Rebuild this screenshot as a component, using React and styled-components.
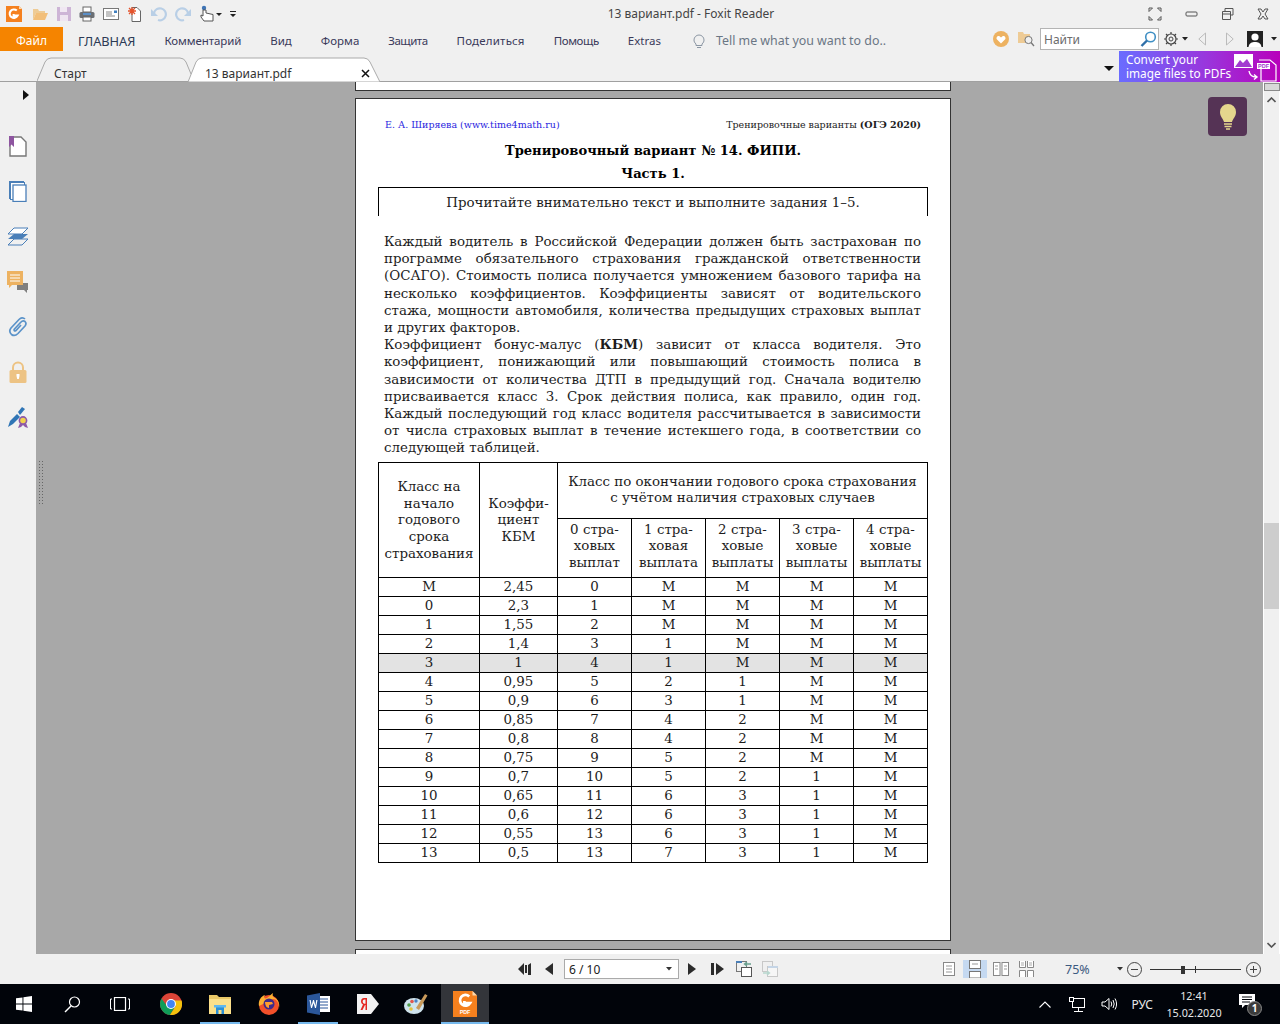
import React from "react";
import styled, { createGlobalStyle } from "styled-components";

const Global = createGlobalStyle`
  html, body { margin: 0; padding: 0; background: #f0f0f0; }
  body { width: 1280px; height: 1024px; overflow: hidden; font-family: "Noto Sans", sans-serif; }
`;

const Win = styled.div`
  width: 1280px;
  height: 1024px;
  display: flex;
  flex-direction: column;
  overflow: hidden;
`;

/* title bar */
const TitleBar = styled.div`
  height: 27px;
  flex: none;
  display: grid;
  grid-template-columns: 1fr auto 1fr;
  align-items: center;
  background: #f0f0f0;
`;
const QuickBar = styled.div`
  display: flex;
  align-items: center;
  gap: 8px;
  padding-left: 6px;
  height: 27px;
`;
const Title = styled.div`
  font-size: 12px;
  color: #444;
  padding-left: 102px;
`;
const WinControls = styled.div`
  display: flex;
  justify-content: flex-end;
  align-items: center;
  gap: 23px;
  padding-right: 11px;
`;

/* ribbon */
const Ribbon = styled.div`
  height: 24px;
  flex: none;
  display: flex;
  align-items: center;
  background: #f0f0f0;
`;
const FileBtn = styled.div`
  width: 63px;
  height: 24px;
  background: #f58400;
  color: #fff;
  font-size: 12px;
  padding-top: 2px;
  box-sizing: border-box;
  display: flex;
  align-items: center;
  justify-content: center;
  margin-right: 15px;
`;
const RibbonTabs = styled.div`
  display: flex;
  align-items: center;
  gap: 29px;
  padding-top: 3px;
`;
const RibbonTab = styled.span`
  font-size: ${(p) => (p.$big ? "12.8px" : "11.5px")};
  letter-spacing: ${(p) => p.$ls || 0}px;
  color: ${(p) => (p.$big ? "#2c3a55" : "#3a3a5a")};
`;
const Tell = styled.div`
  display: flex;
  align-items: center;
  gap: 10px;
  margin-left: 31px;
  padding-top: 3px;
  font-size: 12.4px;
  color: #6b7684;
`;
const RibbonRight = styled.div`
  margin-left: auto;
  display: flex;
  align-items: center;
`;
const SearchBox = styled.div`
  width: 113px;
  height: 20px;
  margin: 0 5px;
  background: #fff;
  border: 1px solid #b4b4b4;
  display: flex;
  align-items: center;
  justify-content: space-between;
  padding: 0 1px 0 3px;
  font-size: 12px;
  color: #6d6d6d;
`;

/* tab strip */
const TabStrip = styled.div`
  height: 31px;
  flex: none;
  display: flex;
  background: #f0f0f0;
  border-bottom: 1px solid #a0a0a0;
  box-sizing: border-box;
  padding-left: 37px;
`;
const DocTab = styled.div`
  position: relative;
  width: ${(p) => p.$w}px;
  margin-left: ${(p) => p.$ml || 0}px;
  height: 31px;
  font-size: 12px;
  color: #333;
  display: flex;
  align-items: center;
  padding: 14px 0 0 ${(p) => p.$pl}px;
  box-sizing: border-box;
  z-index: ${(p) => (p.$active ? 1 : 0)};
  span { position: relative; }
  svg.shape { position: absolute; left: 0; top: 0; }
  svg.x { position: absolute; right: 11px; top: 18px; }
`;
const StripRight = styled.div`
  margin-left: auto;
  display: flex;
  align-items: flex-start;
`;
const Promo = styled.div`
  width: 161px;
  height: 31px;
  background: linear-gradient(90deg, #6a6cff 0%, #9a35dc 55%, #b800bb 100%);
  color: #fff;
  font-size: 11.8px;
  line-height: 13.5px;
  padding: 2px 0 0 7px;
  box-sizing: border-box;
  position: relative;
  svg { position: absolute; right: 0; top: 0; }
`;

/* main */
const Main = styled.div`
  flex: 1;
  display: flex;
  min-height: 0;
`;
const SideBar = styled.div`
  width: 36px;
  flex: none;
  background: #f0f0f0;
  display: flex;
  flex-direction: column;
  align-items: center;
  padding-top: 42px;
  box-sizing: border-box;
  position: relative;
  svg.toggle { position: absolute; left: 23px; top: 7px; }
`;
const SideSlot = styled.div`
  height: 45px;
  flex: none;
  display: flex;
  align-items: center;
`;
const Viewer = styled.div`
  flex: 1;
  background: #a8a8a8;
  position: relative;
  display: flex;
  flex-direction: column;
  align-items: center;
  overflow: hidden;
`;
const Grip = styled.div`
  position: absolute;
  left: 2px;
  top: 378px;
  width: 6px;
  height: 44px;
  background-image: radial-gradient(#666 0.8px, transparent 1px);
  background-size: 3px 3px;
`;
const Sliver = styled.div`
  width: 596px;
  height: ${(p) => p.$h}px;
  flex: none;
  background: #fff;
  border: 1px solid #333;
  box-sizing: border-box;
  ${(p) => (p.$top ? "border-top: 0;" : "border-bottom: 0;")}
  margin-left: 7px;
`;
const Page = styled.div`
  width: 596px;
  height: 843px;
  flex: none;
  margin: 7px 0 8px 7px;
  background: #fff;
  border: 1px solid #333;
  box-sizing: border-box;
  padding: 20px 22px 0 22px;
  font-family: "DejaVu Serif", serif;
  color: #1c1c1c;
`;
const PageHead = styled.div`
  display: flex;
  justify-content: space-between;
  font-size: 9.5px;
  line-height: 12px;
  margin: 0 0 0 7px;
  width: 536px;
`;
const Author = styled.span`
  color: #2a1fe0;
`;
const Heading = styled.div`
  text-align: center;
  font-weight: bold;
  font-size: 13.1px;
  line-height: 23px;
  color: #000;
  width: 550px;
  margin-top: ${(p) => p.$mt || 0}px;
`;
const NoteBox = styled.div`
  width: 550px;
  height: 29px;
  box-sizing: border-box;
  margin-top: 2px;
  border: 1px solid #000;
  border-bottom: 0;
  text-align: center;
  font-size: 13.4px;
  line-height: 30px;
`;
const Body = styled.div`
  margin: 17px 0 0 6px;
  width: 537px;
  font-size: 13.4px;
  line-height: 17.2px;
`;
const Line = styled.div`
  white-space: nowrap;
  text-align: ${(p) => (p.$last ? "left" : "justify")};
  text-align-last: ${(p) => (p.$last ? "left" : "justify")};
`;
const KbmTable = styled.table`
  border-collapse: collapse;
  table-layout: fixed;
  width: 550px;
  margin-top: 5px;
  font-size: 13.4px;
  line-height: 16.4px;
  color: #1c1c1c;
  th, td {
    border: 1px solid #000;
    padding: 0;
    text-align: center;
    font-weight: normal;
    white-space: nowrap;
  }
  th[rowspan] { padding-top: 2px; line-height: 16.6px; }
  thead tr + tr th { padding-bottom: 2px; }
  tbody tr { height: 19px; }
  tbody td { line-height: 18px; }
`;
const Col = styled.col`
  width: ${(p) => p.$w}px;
`;
const HeadRow = styled.tr`
  height: ${(p) => p.$h}px;
`;
const Row = styled.tr`
  background: ${(p) => (p.$hi ? "#e3e3e3" : "transparent")};
`;
const Bulb = styled.div`
  position: absolute;
  left: 1172px;
  top: 15px;
  width: 39px;
  height: 39px;
  border-radius: 4px;
  background: #553355;
  display: flex;
  align-items: center;
  justify-content: center;
`;
const ScrollBar = styled.div`
  width: 17px;
  flex: none;
  background: #f0f0f0;
  border-left: 1px solid #fff;
  border-right: 1px solid #fff;
  box-sizing: border-box;
  display: flex;
  flex-direction: column;
  align-items: center;
  position: relative;
`;
const SplitBox = styled.div`
  width: 16px;
  height: 8px;
  margin: 1px -1px 0 0;
  background: #d8d8d8;
  border: 1px solid #8a8a8a;
  box-sizing: border-box;
  flex: none;
`;
const Thumb = styled.div`
  position: absolute;
  top: 441px;
  left: 0;
  width: 15px;
  height: 86px;
  background: #cdcdcd;
`;
const ArrowSlot = styled.div`
  margin-top: ${(p) => (p.$end ? "auto" : "6px")};
  margin-bottom: ${(p) => (p.$end ? "2px" : "0")};
  height: 10px;
  display: flex;
`;

/* status bar */
const StatusBar = styled.div`
  height: 30px;
  flex: none;
  background: #f0f0f0;
  display: flex;
  align-items: center;
  padding-left: 518px;
  box-sizing: border-box;
`;
const PageInput = styled.div`
  width: 115px;
  height: 20px;
  box-sizing: border-box;
  border: 1px solid #aaa;
  background: #fff;
  margin: 0 9px 0 11px;
  display: flex;
  align-items: center;
  justify-content: space-between;
  padding: 0 6px 0 4px;
  font-size: 12px;
  color: #222;
`;
const Zoomed = styled.span`
  font-size: 12.5px;
  color: #3d5a80;
  width: 26px;
  margin-left: 26.5px;
`;
const LayoutBtn = styled.div`
  width: 24px;
  height: 18px;
  display: flex;
  align-items: center;
  justify-content: center;
  background: ${(p) => (p.$on ? "#c5d9f1" : "transparent")};
  margin-left: ${(p) => p.$ml || 0}px;
`;
const Slider = styled.div`
  width: 91px;
  height: 1px;
  background: #333;
  margin: 0 5px 0 7px;
  position: relative;
  &::before { content: ""; position: absolute; left: 31px; top: -3px; width: 4px; height: 8px; background: #333; }
  &::after { content: ""; position: absolute; left: 45px; top: -3px; width: 1px; height: 7px; background: #333; }
`;

/* task bar */
const TaskBar = styled.div`
  height: 40px;
  flex: none;
  background: #01040a;
  display: flex;
  align-items: stretch;
`;
const TaskSlot = styled.div`
  width: ${(p) => p.$w || 48}px;
  margin-left: ${(p) => p.$ml || 0}px;
  display: flex;
  align-items: center;
  justify-content: center;
  box-sizing: border-box;
  background: ${(p) => (p.$active ? "#33353a" : "transparent")};
  position: relative;
  ${(p) => p.$open && `&::after { content: ""; position: absolute; left: ${p.$active ? 0 : 4.5}px; right: ${p.$active ? 0 : 4.5}px; bottom: 0; height: 2px; background: #76b9ed; }`}
`;
const Tray = styled.div`
  margin-left: auto;
  display: flex;
  align-items: center;
  color: #fff;
  font-size: 12px;
`;
const Clock = styled.div`
  width: 62px;
  margin: 0 14px 0 10px;
  text-align: center;
  line-height: 17px;
  font-size: 10.8px;
  color: #e8e8e8;
`;
const Lang = styled.span`
  margin-left: 14px;
  font-size: 12px;
  color: #e8e8e8;
`;
const Gap = styled.div`
  width: ${(p) => p.$w}px;
  flex: none;
`;
const Notif = styled.div`
  position: relative;
  width: 20px;
  height: 20px;
  margin-right: 21px;
`;
const NotifBadge = styled.span`
  position: absolute;
  right: -3px;
  bottom: -2px;
  width: 15px;
  height: 15px;
  border-radius: 50%;
  background: #3b3b3b;
  border: 1px solid #888;
  box-sizing: border-box;
  color: #fff;
  font-size: 10px;
  font-weight: bold;
  line-height: 13px;
  text-align: center;
`;
const Svg = styled.svg`
  flex: none;
  display: block;
  margin: ${(p) => p.$m || 0};
`;

const Ic = ({ w = 16, h = 16, m, children }) => (
  <Svg width={w} height={h} viewBox={`0 0 ${w} ${h}`} $m={m}>
    {children}
  </Svg>
);

const FoxitLogo = ({ s = 16, pdf }) => (
  <Svg width={s} height={pdf ? s + 2 : s} viewBox={pdf ? "0 0 16 17.3" : "0 0 16 16"}>
    <path d={pdf ? "M0 0H13L16 3V17.3H0Z" : "M0 0H13L16 3V16H0Z"} fill="#f5801e" />
    <path d="M13 0L16 3H13Z" fill="#fbd9b0" />
    <path
      d={pdf ? "M10.8 3.6A3.6 3.6 0 1 0 11.4 8H7.6V6.6" : "M10.8 4.6A4.2 4.2 0 1 0 11.6 9.6H7.6V7.9"}
      fill="none"
      stroke="#fff"
      strokeWidth={pdf ? 1.8 : 2.1}
    />
    {pdf && (
      <text x="8" y="15.6" fontSize="3.6" fontWeight="bold" textAnchor="middle" fill="#fff" fontFamily="Liberation Sans, sans-serif">
        PDF
      </text>
    )}
  </Svg>
);

function QuickIcons() {
  return (
    <QuickBar>
      <FoxitLogo />
      <Ic m="0 0 0 2px">
        <path d="M1 3H6L7 5H13V7H4L1 14Z" fill="#eecb95" />
        <path d="M4 7H16L13 14H1Z" fill="#f2bf7a" />
      </Ic>
      <Ic w={15} h={16}>
        <rect x="1" y="1" width="14" height="14" fill="#cdb5d6" />
        <rect x="4" y="1" width="7" height="5" fill="#f0e8f2" />
        <rect x="4" y="9" width="8" height="6" fill="#eee5f0" />
      </Ic>
      <Ic>
        <rect x="4" y="1" width="8" height="5" fill="#fff" stroke="#666" />
        <rect x="0.5" y="6" width="15" height="6" rx="1.5" fill="#6b6f74" />
        <rect x="4" y="7" width="8" height="2" fill="#5b8fc7" />
        <rect x="4" y="11" width="8" height="4" fill="#fff" stroke="#666" />
      </Ic>
      <Ic>
        <rect x="0.5" y="2.5" width="15" height="11" fill="#fff" stroke="#777" />
        <path d="M3 6H9M3 8H9M3 10H12" stroke="#888" />
        <rect x="11" y="4.5" width="3" height="2.5" fill="#3f7fbf" />
      </Ic>
      <Ic>
        <path d="M5 1.5H10L13.5 5V15.5H5Z" fill="#fff" stroke="#666" />
        <path d="M5 1V9M1 5H9M2 2L8 8M8 2L2 8" stroke="#e4532c" strokeWidth="1.3" />
      </Ic>
      <Ic>
        <path d="M3 7A6 6 0 1 1 7 14" fill="none" stroke="#b9cfe6" strokeWidth="2.2" />
        <path d="M0 3V10H7Z" fill="#b9cfe6" />
      </Ic>
      <Ic>
        <path d="M13 7A6 6 0 1 0 9 14" fill="none" stroke="#b9cfe6" strokeWidth="2.2" />
        <path d="M16 3V10H9Z" fill="#b9cfe6" />
      </Ic>
      <Ic w={16} h={18}>
        <circle cx="5" cy="3" r="2.2" fill="#3f74b5" />
        <path d="M4 5V11L2 10V12L5 16H14V9.5L7 8V5Z" fill="#fff" stroke="#555" />
      </Ic>
      <Ic w={6} h={16} m="0 0 0 -7px">
        <path d="M0 7H6L3 10Z" fill="#222" />
      </Ic>
      <Ic w={6} h={16}>
        <path d="M0 5H6V6H0ZM0 8H6L3 11Z" fill="#222" />
      </Ic>
    </QuickBar>
  );
}

function WindowButtons() {
  return (
    <WinControls>
      <Ic w={14} h={14}>
        <path d="M1 1H4.5L1 4.5ZM13 1H9.5L13 4.5ZM1 13H4.5L1 9.5ZM13 13H9.5L13 9.5Z" fill="none" stroke="#555" />
      </Ic>
      <Ic w={13} h={14}>
        <rect x="1" y="5" width="11" height="4" rx="1" fill="none" stroke="#555" />
      </Ic>
      <Ic w={13} h={14}>
        <path d="M4 4V1.5H12V8H9.5M1.5 4.5H9.5V12.5H1.5Z" fill="none" stroke="#555" />
        <path d="M2 7H9" stroke="#555" />
      </Ic>
      <Ic w={12} h={14}>
        <path d="M1 2L4 2L6 5L8 2L11 2L8 7L11 12H8L6 9L4 12H1L4 7Z" fill="none" stroke="#555" />
      </Ic>
    </WinControls>
  );
}

function SideIcons() {
  return (
    <SideBar>
      <svg className="toggle" width="6" height="12" viewBox="0 0 6 12">
        <path d="M0 1L6 6L0 11Z" fill="#111" />
      </svg>
      <SideSlot>
        <Ic w={18} h={21}>
          <path d="M1 1H12L17 6V20H1Z" fill="#fff" stroke="#777" strokeWidth="1.4" />
          <path d="M0 0H5V11L2.5 8.5L0 11Z" fill="#8e55a0" />
        </Ic>
      </SideSlot>
      <SideSlot>
        <Ic w={18} h={21}>
          <rect x="0.5" y="0.5" width="14" height="17" fill="none" stroke="#4a7fb8" />
          <rect x="1.5" y="1.5" width="14" height="17" fill="#fff" stroke="#4a7fb8" />
          <rect x="4" y="4" width="13" height="16.5" fill="#fff" stroke="#4a7fb8" strokeWidth="1.3" />
        </Ic>
      </SideSlot>
      <SideSlot>
        <Ic w={22} h={19}>
          <path d="M1 18L7 12H21L15 18Z" fill="none" stroke="#4a7fb8" />
          <path d="M1 12L7 7H21L15 12Z" fill="#4a7fb8" />
          <path d="M1 7L7 1H21L15 7Z" fill="#fff" stroke="#4a7fb8" />
        </Ic>
      </SideSlot>
      <SideSlot>
        <Ic w={22} h={22}>
          <path d="M10 12H21V19H20V22L17 19H10Z" fill="#7f7f7f" />
          <path d="M0 0H16V14H5L2 17V14H0Z" fill="#edb261" />
          <path d="M3 4H13M3 7H13M3 10H13" stroke="#fff" />
        </Ic>
      </SideSlot>
      <SideSlot>
        <Ic w={20} h={21}>
          <path d="M17 3C15 1 13 1.5 11 3.5L3 12C1 14.5 2 17 3.5 18.5C5.5 20 8 19.5 10 17.5L17 10C18.5 8 18 6.5 17 5.5C15.5 4.5 14 5 12.5 6.5L6.5 13C5.5 14.5 6.5 15.5 8 14.5L13 9" fill="none" stroke="#5b93c9" strokeWidth="1.7" />
        </Ic>
      </SideSlot>
      <SideSlot>
        <Ic w={18} h={22}>
          <path d="M4 10V6.5A5 5 0 0 1 14 6.5V10" fill="none" stroke="#edc384" strokeWidth="2" />
          <rect x="0.5" y="9" width="17" height="13" rx="1.5" fill="#edc384" />
          <path d="M7.5 13H10.5V15L9.8 18H8.2L7.5 15Z" fill="#fff" />
        </Ic>
      </SideSlot>
      <SideSlot>
        <Ic w={20} h={22}>
          <path d="M0 21L2 15L9 8L12 11L5 18Z" fill="#2f75b5" />
          <path d="M10 6L14 1L17 3L12 9Z" fill="#2f75b5" />
          <path d="M12 17L10 22L13 21L15 19L17 21L20 22L18 17Z" fill="#8e5aa8" />
          <circle cx="15" cy="14.5" r="3.6" fill="#f3d24b" stroke="#8e5aa8" strokeWidth="1.6" />
        </Ic>
      </SideSlot>
    </SideBar>
  );
}

const LINES_1 = [
  "Каждый водитель в Российской Федерации должен быть застрахован по",
  "программе обязательного страхования гражданской ответственности",
  "(ОСАГО). Стоимость полиса получается умножением базового тарифа на",
  "несколько коэффициентов. Коэффициенты зависят от водительского",
  "стажа, мощности автомобиля, количества предыдущих страховых выплат",
];
const LINES_2 = [
  "коэффициент, понижающий или повышающий стоимость полиса в",
  "зависимости от количества ДТП в предыдущий год. Сначала водителю",
  "присваивается класс 3. Срок действия полиса, как правило, один год.",
  "Каждый последующий год класс водителя рассчитывается в зависимости",
  "от числа страховых выплат в течение истекшего года, в соответствии со",
];
const ROWS = [
  ["М", "2,45", "0", "М", "М", "М", "М"],
  ["0", "2,3", "1", "М", "М", "М", "М"],
  ["1", "1,55", "2", "М", "М", "М", "М"],
  ["2", "1,4", "3", "1", "М", "М", "М"],
  ["3", "1", "4", "1", "М", "М", "М"],
  ["4", "0,95", "5", "2", "1", "М", "М"],
  ["5", "0,9", "6", "3", "1", "М", "М"],
  ["6", "0,85", "7", "4", "2", "М", "М"],
  ["7", "0,8", "8", "4", "2", "М", "М"],
  ["8", "0,75", "9", "5", "2", "М", "М"],
  ["9", "0,7", "10", "5", "2", "1", "М"],
  ["10", "0,65", "11", "6", "3", "1", "М"],
  ["11", "0,6", "12", "6", "3", "1", "М"],
  ["12", "0,55", "13", "6", "3", "1", "М"],
  ["13", "0,5", "13", "7", "3", "1", "М"],
];
const PAYOUTS = [
  ["0 стра-", "ховых", "выплат"],
  ["1 стра-", "ховая", "выплата"],
  ["2 стра-", "ховые", "выплаты"],
  ["3 стра-", "ховые", "выплаты"],
  ["4 стра-", "ховые", "выплаты"],
];

function DocPage() {
  return (
    <Page>
      <PageHead>
        <Author>Е. А. Ширяева (www.time4math.ru)</Author>
        <span>
          Тренировочные варианты <b>(ОГЭ 2020)</b>
        </span>
      </PageHead>
      <Heading $mt={8}>Тренировочный вариант № 14. ФИПИ.</Heading>
      <Heading>Часть 1.</Heading>
      <NoteBox>Прочитайте внимательно текст и выполните задания 1–5.</NoteBox>
      <Body>
        {LINES_1.map((l) => (
          <Line key={l}>{l}</Line>
        ))}
        <Line $last>и других факторов.</Line>
        <Line>
          Коэффициент бонус-малус (<b>КБМ</b>) зависит от класса водителя. Это
        </Line>
        {LINES_2.map((l) => (
          <Line key={l}>{l}</Line>
        ))}
        <Line $last>следующей таблицей.</Line>
      </Body>
      <KbmTable>
        <colgroup>
          <Col $w={101} />
          <Col $w={78} />
          <Col $w={74} />
          <Col $w={74} />
          <Col $w={74} />
          <Col $w={74} />
          <Col $w={74} />
        </colgroup>
        <thead>
          <HeadRow $h={56}>
            <th rowSpan={2}>
              Класс на
              <br />
              начало
              <br />
              годового
              <br />
              срока
              <br />
              страхования
            </th>
            <th rowSpan={2}>
              Коэффи-
              <br />
              циент
              <br />
              КБМ
            </th>
            <th colSpan={5}>
              Класс по окончании годового срока страхования
              <br />с учётом наличия страховых случаев
            </th>
          </HeadRow>
          <HeadRow $h={59}>
            {PAYOUTS.map((p, i) => (
              <th key={i}>
                {p[0]}
                <br />
                {p[1]}
                <br />
                {p[2]}
              </th>
            ))}
          </HeadRow>
        </thead>
        <tbody>
          {ROWS.map((r, i) => (
            <Row key={i} $hi={i === 4}>
              {r.map((c, j) => (
                <td key={j}>{c}</td>
              ))}
            </Row>
          ))}
        </tbody>
      </KbmTable>
    </Page>
  );
}

function StatusBarRow() {
  const dark = "#2b2b2b";
  return (
    <StatusBar>
      <Ic w={13} h={14}>
        <path d="M6 1L0 7L6 13ZM7 3H9V11H7Z" fill={dark} />
        <path d="M13 1V13H10V3Z" fill={dark} />
      </Ic>
      <Gap $w={14} />
      <Ic w={8} h={14}>
        <path d="M8 1L0 7L8 13Z" fill={dark} />
      </Ic>
      <PageInput>
        6 / 10
        <svg width="6" height="4" viewBox="0 0 6 4">
          <path d="M0 0H6L3 3.5Z" fill="#333" />
        </svg>
      </PageInput>
      <Ic w={8} h={14}>
        <path d="M0 1L8 7L0 13Z" fill={dark} />
      </Ic>
      <Gap $w={15} />
      <Ic w={13} h={14}>
        <path d="M0 1H3V13H0ZM5 1L13 7L5 13Z" fill={dark} />
      </Ic>
      <Gap $w={12} />
      <Ic w={16} h={16}>
        <rect x="0.5" y="0.5" width="10" height="10" fill="none" stroke="#777" />
        <rect x="0" y="0" width="6" height="2" fill="#4a7fb8" />
        <rect x="5.5" y="6.5" width="10" height="9" fill="#fff" stroke="#555" />
        <path d="M15 3H9M11 1L8.5 3L11 5" fill="none" stroke="#6aa08f" strokeWidth="1.4" />
      </Ic>
      <Gap $w={10} />
      <Ic w={16} h={16}>
        <rect x="0.5" y="0.5" width="10" height="10" fill="none" stroke="#c8c8c8" />
        <rect x="5.5" y="5.5" width="10" height="10" fill="#f6f6f6" stroke="#c8c8c8" />
        <rect x="6" y="5" width="10" height="2" fill="#c5d5e6" />
        <path d="M1 12H7M5 10L7.5 12L5 14" fill="none" stroke="#b6d6cd" strokeWidth="1.4" />
      </Ic>
      <LayoutBtn $ml={159}>
        <Ic w={12} h={14}>
          <rect x="0.5" y="0.5" width="11" height="13" fill="#fff" stroke="#888" />
          <path d="M3 4H9M3 7H9M3 10H9" stroke="#999" />
        </Ic>
      </LayoutBtn>
      <LayoutBtn $on $ml={2}>
        <Ic w={12} h={18}>
          <rect x="0.5" y="0.5" width="11" height="8" fill="#fff" stroke="#777" />
          <rect x="0.5" y="11.5" width="11" height="6.5" fill="#fff" stroke="#777" />
          <path d="M3 4H9" stroke="#999" />
        </Ic>
      </LayoutBtn>
      <LayoutBtn $ml={2}>
        <Ic w={16} h={14}>
          <rect x="0.5" y="0.5" width="6.5" height="13" fill="#fff" stroke="#888" />
          <rect x="9" y="0.5" width="6.5" height="13" fill="#fff" stroke="#888" />
          <path d="M2 4H5M2 7H5M11 4H14M11 7H14" stroke="#999" />
        </Ic>
      </LayoutBtn>
      <LayoutBtn $ml={1.5}>
        <Ic w={15} h={16}>
          <path d="M0.5 0V6.5H6.5V0M8.5 0V6.5H14.5V0M0.5 16V9.5H6.5V16M8.5 16V9.5H14.5V16" fill="#fff" stroke="#888" />
          <path d="M2 2H5M2 4H5M10 2H13M10 4H13" stroke="#aaa" />
        </Ic>
      </LayoutBtn>
      <Zoomed>75%</Zoomed>
      <Gap $w={26} />
      <Ic w={6} h={4}>
        <path d="M0 0H6L3 3.5Z" fill="#333" />
      </Ic>
      <Gap $w={4} />
      <Ic w={15} h={15}>
        <circle cx="7.5" cy="7.5" r="7" fill="none" stroke="#444" />
        <path d="M4 7.5H11" stroke="#444" />
      </Ic>
      <Gap $w={1} />
      <Slider />
      <Ic w={15} h={15}>
        <circle cx="7.5" cy="7.5" r="7" fill="none" stroke="#444" />
        <path d="M4 7.5H11M7.5 4V11" stroke="#444" />
      </Ic>
    </StatusBar>
  );
}

function TaskBarRow() {
  return (
    <TaskBar>
      <TaskSlot>
        <Ic w={16} h={16}>
          <path d="M0 2.3L6.5 1.4V7.6H0ZM7.4 1.3L16 0V7.6H7.4ZM0 8.4H6.5V14.6L0 13.7ZM7.4 8.4H16V16L7.4 14.7Z" fill="#fff" />
        </Ic>
      </TaskSlot>
      <TaskSlot>
        <Ic w={17} h={17}>
          <circle cx="10.5" cy="6" r="5" fill="none" stroke="#fff" strokeWidth="1.2" />
          <path d="M7 10L1 16" stroke="#fff" strokeWidth="1.4" />
        </Ic>
      </TaskSlot>
      <TaskSlot>
        <Ic w={20} h={14}>
          <rect x="4.5" y="0.5" width="11" height="13" fill="none" stroke="#fff" strokeWidth="1.2" />
          <path d="M2 2H0.5V12H2M18 2H19.5V12H18" fill="none" stroke="#fff" />
        </Ic>
      </TaskSlot>
      <TaskSlot $w={49} $ml={2.5}>
        <Ic w={22} h={22}>
          <circle cx="11" cy="11" r="11" fill="#db4437" />
          <path d="M1.5 5.5A11 11 0 0 0 10 22L15.5 13H7Z" fill="#0f9d58" />
          <path d="M21.5 7.5H11L15.8 13L10 22A11 11 0 0 0 21.5 7.5Z" fill="#f4c20d" />
          <circle cx="11" cy="11" r="5" fill="#fff" />
          <circle cx="11" cy="11" r="3.9" fill="#4285f4" />
        </Ic>
      </TaskSlot>
      <TaskSlot $w={49} $open>
        <Ic w={22} h={21}>
          <path d="M0 1H8L10 3H22V19H0Z" fill="#e9c868" />
          <path d="M0 5H22V20H0Z" fill="#fbe08b" />
          <path d="M7 20V13H15V20H12.5V16H9.5V20Z" fill="#2a8fd6" />
          <rect x="5" y="11" width="12" height="2.5" fill="#5fb8ef" />
        </Ic>
      </TaskSlot>
      <TaskSlot $w={49}>
        <Ic w={22} h={22}>
          <circle cx="11" cy="12" r="10" fill="#f2502a" />
          <path d="M1 13C0 8 3 3 7 2C5 5 7 6 9 5C11 4 12 2 15 0C14 3 15 4 17 5C20 7 22 10 21 15C21 9 18 6 15 6Z" fill="#fbb034" />
          <circle cx="11" cy="11" r="5.5" fill="#3e2b8a" />
          <path d="M7 9H14L15 11L11 12V15C8 15 7 11 7 9Z" fill="#ff9d2e" />
        </Ic>
      </TaskSlot>
      <TaskSlot $w={49} $open>
        <Ic w={23} h={22}>
          <rect x="11" y="3" width="12" height="16" fill="#fff" />
          <path d="M13 6H21M13 9H21M13 12H21M13 15H21" stroke="#2b579a" />
          <path d="M0 2.5L13 0V22L0 19.5Z" fill="#2b579a" />
          <path d="M2.5 7L4 15H5L6.5 10L8 15H9L10.5 7H9.3L8.4 12.5L7 7H6L4.6 12.5L3.7 7Z" fill="#fff" />
        </Ic>
      </TaskSlot>
      <TaskSlot $w={49}>
        <Ic w={23} h={22}>
          <path d="M1 1H15L23 11L15 21H1Z" fill="#f2f2f2" />
          <path d="M11 5H8C6 5 5 6.5 5 8.5C5 10 6 11 7 11.5L4.5 17H6.5L9 12H9.5V17H11ZM9.5 6.5V10.7H8.5C7.3 10.7 6.7 9.8 6.7 8.6C6.7 7.3 7.4 6.5 8.5 6.5Z" fill="#e52620" />
        </Ic>
      </TaskSlot>
      <TaskSlot $w={49}>
        <Ic w={24} h={22}>
          <ellipse cx="10" cy="13" rx="10" ry="8" fill="#cfe3ec" />
          <circle cx="5" cy="12" r="1.8" fill="#4f9e4a" />
          <circle cx="8" cy="8.5" r="1.8" fill="#e2574c" />
          <circle cx="12" cy="8" r="1.7" fill="#4a80c4" />
          <circle cx="7" cy="16" r="1.8" fill="#e6c33c" />
          <path d="M12 15L21 1L23.5 2.5L15 17Z" fill="#c99a5b" />
        </Ic>
      </TaskSlot>
      <TaskSlot $w={48} $ml={0.5} $active $open>
        <FoxitLogo s={24} pdf />
      </TaskSlot>
      <Tray>
        <Ic w={12} h={7}>
          <path d="M0.5 6.5L6 1L11.5 6.5" fill="none" stroke="#fff" strokeWidth="1.1" />
        </Ic>
        <Gap $w={18} />
        <Ic w={16} h={15}>
          <rect x="3.5" y="1.5" width="12" height="9" fill="none" stroke="#fff" />
          <rect x="0.5" y="0.5" width="4" height="4" fill="#01040a" stroke="#fff" />
          <path d="M9.5 11V14M5 14.5H14" stroke="#fff" />
        </Ic>
        <Gap $w={16} />
        <Ic w={16} h={14}>
          <path d="M1 5H4L8 1.5V12.5L4 9H1Z" fill="none" stroke="#fff" />
          <path d="M10 4.5Q11.5 7 10 9.5M12 3Q14.4 7 12 11M14 1.5Q17.2 7 14 12.5" fill="none" stroke="#fff" />
        </Ic>
        <Lang>РУС</Lang>
        <Clock>
          12:41
          <br />
          15.02.2020
        </Clock>
        <Notif>
          <Ic w={16} h={15}>
            <path d="M0 0H16V11H6L3 14V11H0Z" fill="#fff" />
            <path d="M3 3H13M3 5.5H13M3 8H11" stroke="#01040a" />
          </Ic>
          <NotifBadge>1</NotifBadge>
        </Notif>
      </Tray>
    </TaskBar>
  );
}

export default function App() {
  return (
    <Win>
      <Global />
      <TitleBar>
        <QuickIcons />
        <Title>13 вариант.pdf - Foxit Reader</Title>
        <WindowButtons />
      </TitleBar>
      <Ribbon>
        <FileBtn>Файл</FileBtn>
        <RibbonTabs>
          <RibbonTab $big>ГЛАВНАЯ</RibbonTab>
          <RibbonTab $ls={-0.1}>Комментарий</RibbonTab>
          <RibbonTab>Вид</RibbonTab>
          <RibbonTab>Форма</RibbonTab>
          <RibbonTab $ls={-0.5}>Защита</RibbonTab>
          <RibbonTab $ls={0.2}>Поделиться</RibbonTab>
          <RibbonTab $ls={-0.4}>Помощь</RibbonTab>
          <RibbonTab>Extras</RibbonTab>
        </RibbonTabs>
        <Tell>
          <Ic w={14} h={16}>
            <path d="M4 11C2.5 9.5 2 8.5 2 7A5 5 0 0 1 12 7C12 8.5 11.5 9.5 10 11V12.5H4Z" fill="none" stroke="#8b96a3" />
            <path d="M5 14.5H9" stroke="#8b96a3" />
          </Ic>
          Tell me what you want to do..
        </Tell>
        <RibbonRight>
          <Ic w={16} h={16}>
            <circle cx="8" cy="8" r="8" fill="#edb261" />
            <path d="M8 12.5L3.8 8.2C2.6 6.5 4.7 4 6.5 5.2L8 6.4L9.5 5.2C11.3 4 13.4 6.5 12.2 8.2Z" fill="#fff" />
          </Ic>
          <Gap $w={9} />
          <Ic w={17} h={16}>
            <path d="M0 1H5L6 3H12V12H0Z" fill="#eecb95" />
            <circle cx="10.5" cy="9" r="3.6" fill="#f0f0f0" stroke="#777" />
            <path d="M13 11.5L16 15" stroke="#777" strokeWidth="1.3" />
          </Ic>
          <SearchBox>
            Найти
            <Ic w={17} h={17}>
              <circle cx="10.5" cy="6" r="4.8" fill="#fff" stroke="#3f8fc4" strokeWidth="1.6" />
              <path d="M7 9.5L1.5 15" stroke="#2f6fa8" strokeWidth="2.4" />
            </Ic>
          </SearchBox>
          <Ic w={14} h={14}>
            <circle cx="7" cy="7" r="2" fill="none" stroke="#444" />
            <circle cx="7" cy="7" r="5" fill="none" stroke="#444" strokeWidth="1.2" />
            <path d="M7 0V2M7 12V14M0 7H2M12 7H14M2 2L3.5 3.5M10.5 10.5L12 12M2 12L3.5 10.5M10.5 3.5L12 2" stroke="#444" strokeWidth="1.2" />
          </Ic>
          <Gap $w={4} />
          <Ic w={6} h={4}>
            <path d="M0 0H6L3 3.5Z" fill="#222" />
          </Ic>
          <Gap $w={10} />
          <Ic w={8} h={14}>
            <path d="M7.5 1V13L0.8 7Z" fill="none" stroke="#bbb" />
          </Ic>
          <Gap $w={20} />
          <Ic w={8} h={14}>
            <path d="M0.5 1V13L7.2 7Z" fill="none" stroke="#bbb" />
          </Ic>
          <Gap $w={13} />
          <Ic w={16} h={16}>
            <rect width="16" height="16" fill="#222" />
            <circle cx="8" cy="6" r="3.6" fill="#fff" />
            <path d="M1.5 16C2 12 5 11 8 11C11 11 14 12 14.5 16Z" fill="#fff" />
          </Ic>
          <Gap $w={8} />
          <Ic w={6} h={4} m="0 3px 0 0">
            <path d="M0 0H6L3 3.5Z" fill="#222" />
          </Ic>
        </RibbonRight>
      </Ribbon>
      <TabStrip>
        <DocTab $w={155} $pl={17}>
          <svg className="shape" width="155" height="31" viewBox="0 0 155 31">
            <path d="M0 30L8 11Q10 7 14 7H143Q147 7 149 11L154 23" fill="none" stroke="#aaa" />
          </svg>
          <span>Старт</span>
        </DocTab>
        <DocTab $w={193} $ml={-4} $pl={17} $active>
          <svg className="shape" width="193" height="31" viewBox="0 0 193 31">
            <path d="M0 31L8 11Q10 7 14 7H176Q180 7 182 11L192 31Z" fill="#fff" stroke="#aaa" />
          </svg>
          <span>13 вариант.pdf</span>
          <svg className="x" width="9" height="9" viewBox="0 0 9 9">
            <path d="M1 1L8 8M8 1L1 8" stroke="#111" strokeWidth="1.5" />
          </svg>
        </DocTab>
        <StripRight>
          <Ic w={10} h={5} m="15px 5px 0 0">
            <path d="M0 0H10L5 5Z" fill="#111" />
          </Ic>
          <Promo>
            Convert your
            <br />
            image files to PDFs
            <svg width="48" height="31" viewBox="0 0 48 31">
              <rect x="2" y="3" width="19" height="14" fill="#fff" />
              <path d="M3 16L8 9L11 12L15 8L20 16Z" fill="#a23ad0" />
              <path d="M27 9H38L44 14V30H29V18" fill="none" stroke="#fff" strokeWidth="1.2" />
              <rect x="25" y="12" width="13" height="6" fill="#fff" />
              <text x="31.5" y="17" fontSize="5.5" fontWeight="bold" textAnchor="middle" fill="#a23ad0" fontFamily="Liberation Sans, sans-serif">
                PDF
              </text>
              <path d="M17 20Q18 26 24 26M22 23.5L25 26L22 28.5" fill="none" stroke="#fff" strokeWidth="1.4" />
            </svg>
          </Promo>
        </StripRight>
      </TabStrip>
      <Main>
        <SideIcons />
        <Viewer>
          <Grip />
          <Sliver $h={9} $top />
          <DocPage />
          <Sliver $h={6} />
          <Bulb>
            <Ic w={18} h={28}>
              <path d="M5 19C4.5 16 1 14 1 9A8 8 0 0 1 17 9C17 14 13.5 16 13 19Z" fill="#e5d68d" />
              <path d="M5 21H13M5.5 23.5H12.5M7 26H11" stroke="#e5d68d" strokeWidth="1.5" />
            </Ic>
          </Bulb>
        </Viewer>
        <ScrollBar>
          <SplitBox />
          <ArrowSlot>
            <Ic w={9} h={6}>
              <path d="M0.5 5L4.5 1L8.5 5" fill="none" stroke="#555" strokeWidth="1.6" />
            </Ic>
          </ArrowSlot>
          <Thumb />
          <ArrowSlot $end>
            <Ic w={9} h={6}>
              <path d="M0.5 1L4.5 5L8.5 1" fill="none" stroke="#555" strokeWidth="1.6" />
            </Ic>
          </ArrowSlot>
        </ScrollBar>
      </Main>
      <StatusBarRow />
      <TaskBarRow />
    </Win>
  );
}
